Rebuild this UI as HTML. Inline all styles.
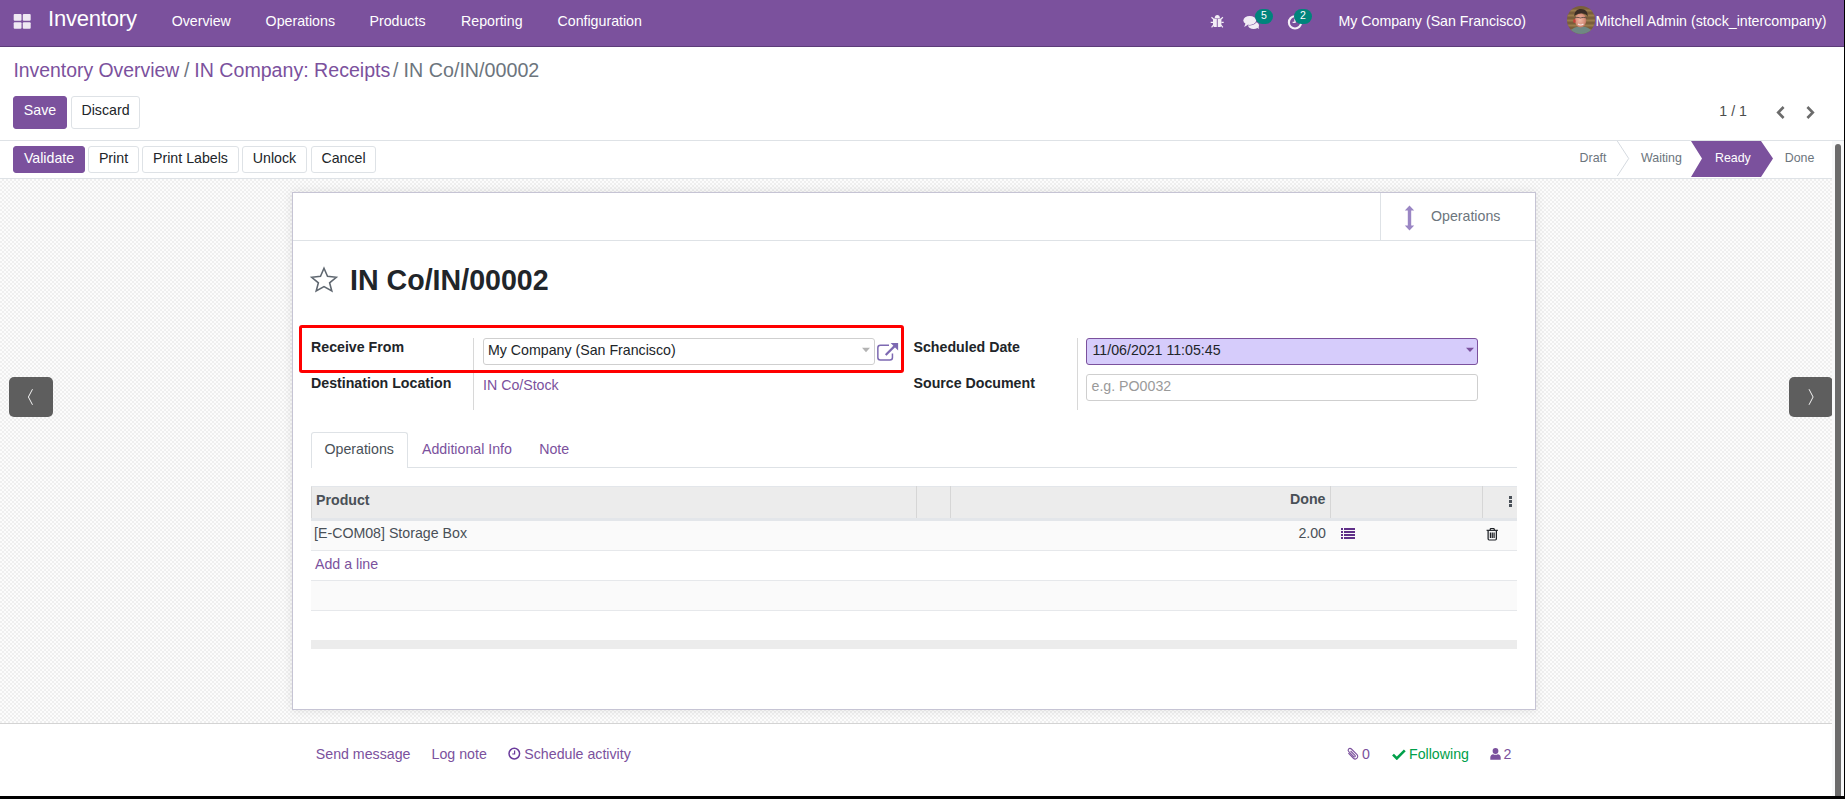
<!DOCTYPE html>
<html><head><meta charset="utf-8">
<style>
*{box-sizing:border-box;margin:0;padding:0}
html,body{width:1845px;height:799px;overflow:hidden;background:#000}
body{position:relative;font-family:"Liberation Sans",sans-serif;font-size:14.2px;color:#212529}
.a{position:absolute;white-space:nowrap;line-height:20px}
.b{position:absolute}
#page{position:absolute;left:0;top:0;width:1844px;height:796px;background:#fff;overflow:hidden}
#nav{position:absolute;left:0;top:0;width:1844px;height:47px;background:#7B519D;border-bottom:1px solid #5C3C79}
#nav .a{color:#fff}
.btn{position:absolute;border:1px solid #dee2e6;border-radius:3px;background:#fff}
.btnp{background:#7B519D;border-color:#7B519D}
.bt{position:absolute;left:0;right:0;text-align:center;white-space:nowrap;line-height:20px}
.lnk{color:#7B519D}
.hr{position:absolute;height:1px;background:#dee2e6}
.vr{position:absolute;width:1px;background:#dee2e6}
#formbg{position:absolute;left:0;top:179px;width:1832px;height:544px;background-color:#f6f6f6;
 background-image:repeating-conic-gradient(#efefef 0 25%, #fcfcfc 0 50%);background-size:4px 4px}
#sheet{position:absolute;left:292px;top:192px;width:1244px;height:518px;background:#fff;border:1px solid #c6c4d4;box-shadow:0 0 9px rgba(0,0,0,.10)}
.lbl{font-weight:bold;color:#212529}
.inp{position:absolute;border:1px solid #cfcfcf;border-radius:3px;background:#fff}
.g{color:#6c757d}
.bc{top:57px;font-size:19.4px;line-height:26px}
.st{font-size:12.4px}
.d{color:#495057}
</style></head>
<body>
<div id="page">
<!-- NAVBAR -->
<div id="nav">
  <svg class="b" style="left:13px;top:14px" width="19" height="16" viewBox="0 0 19 16"><g fill="#efe9f3"><rect x="0.7" y="0.1" width="7.8" height="6.7" rx="1"/><rect x="9.8" y="0.1" width="7.9" height="6.7" rx="1"/><rect x="0.7" y="8.2" width="7.8" height="6.6" rx="1"/><rect x="9.8" y="8.2" width="7.9" height="6.6" rx="1"/></g></svg>
  <div class="a" style="left:48px;top:6px;font-size:22px;line-height:26px;letter-spacing:-0.2px">Inventory</div>
  <div class="a" style="left:171.7px;top:11px">Overview</div>
  <div class="a" style="left:265.6px;top:11px">Operations</div>
  <div class="a" style="left:369.5px;top:11px">Products</div>
  <div class="a" style="left:461px;top:11px">Reporting</div>
  <div class="a" style="left:557.5px;top:11px">Configuration</div>
  <!-- bug -->
  <svg class="b" style="left:1210px;top:14px" width="15" height="15" viewBox="0 0 15 15"><g fill="#f3eef6"><path d="M4.7 3.9 C4.7 2.2 5.8 1 7.3 1 C8.8 1 9.9 2.2 9.9 3.9 Z"/><path d="M3 4.5 H11.4 V11.2 C11.4 12.2 10.6 13 9.6 13 H4.8 C3.8 13 3 12.2 3 11.2 Z"/></g><g stroke="#f3eef6" stroke-width="1.2" fill="none"><path d="M3 8.3 H0.7 M11.4 8.3 H13.7 M3.4 5 L1.5 3.3 M11 5 L12.9 3.3 M3.4 11 L1.6 13.4 M11 11 L12.8 13.4"/></g><rect x="6.8" y="4.8" width="0.9" height="8.2" fill="#7B519D"/></svg>
  <!-- chat -->
  <svg class="b" style="left:1238px;top:6px" width="28" height="28" viewBox="0 0 28 28"><g fill="#f1ecf5"><ellipse cx="15.6" cy="19.4" rx="5.4" ry="3.6"/><path d="M18.5 21.5 L21.2 23 L20.2 20.2 Z"/></g><ellipse cx="11.75" cy="14.4" rx="7" ry="5" fill="#7B519D"/><g fill="#f1ecf5"><ellipse cx="11.75" cy="14.4" rx="6.4" ry="4.5"/><path d="M7.5 17.6 L6.2 21 L10.4 18.6 Z"/></g></svg>
  <div class="b" style="left:1255px;top:9px;width:18px;height:15px;border-radius:7.5px;background:#00847C;color:#fff;font-size:10.5px;line-height:13px;text-align:center">5</div>
  <!-- activity clock -->
  <svg class="b" style="left:1287px;top:14px" width="16" height="16" viewBox="0 0 16 16"><circle cx="8" cy="8.4" r="6.1" fill="none" stroke="#f4f0f7" stroke-width="2.1"/><path d="M8 4.6 V8.4 H5.6" fill="none" stroke="#f1ecf5" stroke-width="1.4"/></svg>
  <div class="b" style="left:1294px;top:9px;width:18px;height:15px;border-radius:7.5px;background:#00847C;color:#fff;font-size:10.5px;line-height:13px;text-align:center">2</div>
  <div class="a" style="left:1338.4px;top:11px">My Company (San Francisco)</div>
  <!-- avatar -->
  <svg class="b" style="left:1567px;top:6px" width="28" height="28" viewBox="0 0 28 28">
    <defs><clipPath id="cav"><circle cx="14" cy="14" r="14"/></clipPath>
    <radialGradient id="fg" cx="0.45" cy="0.45" r="0.6"><stop offset="0" stop-color="#f0b9a6"/><stop offset="0.7" stop-color="#d68f7a"/><stop offset="1" stop-color="#b8705e"/></radialGradient></defs>
    <g clip-path="url(#cav)">
      <rect width="28" height="28" fill="#7a5f3a"/>
      <path d="M0 4.5 H28 M0 9.5 H28 M0 14.5 H28 M0 19.5 H28 M0 24.5 H28" stroke="#9a7c4c" stroke-width="2"/>
      <path d="M2 28 C3 23 8 20.5 14 20.5 C20 20.5 25 23 26 28 Z" fill="#6f8883"/>
      <ellipse cx="13.6" cy="14.4" rx="5.6" ry="7.2" fill="url(#fg)"/>
      <path d="M7.4 10.5 C7 5.5 10 3 14 3 C18.5 3 21.2 6 20.6 10.8 C19.4 8 16.5 7.2 13.5 7.4 C10.5 7.6 8.6 8.6 7.4 10.5 Z" fill="#3a2d26"/>
      <path d="M8 11.8 C10 11.2 12 11.4 13.4 12 C15 11.4 17.5 11.2 19.6 12" stroke="#5a4a44" stroke-width="0.9" fill="none"/>
      <path d="M11 18 C12.4 19.2 15 19.2 16.4 18" stroke="#f4e8e4" stroke-width="1.1" fill="none"/>
      <ellipse cx="7.4" cy="15" rx="1.3" ry="2" fill="#c8413a"/>
    </g>
  </svg>
  <div class="a" style="left:1595.5px;top:11px">Mitchell Admin (stock_intercompany)</div>
</div>

<!-- BREADCRUMB -->
<div class="a lnk bc" style="left:13.4px">Inventory Overview</div>
<div class="a g bc" style="left:184px">/</div>
<div class="a lnk bc" style="left:194.3px;font-size:19.6px">IN Company: Receipts</div>
<div class="a g bc" style="left:393px">/</div>
<div class="a g bc" style="left:403.6px;font-size:19.7px">IN Co/IN/00002</div>
<div class="btn btnp" style="left:13px;top:96px;width:54px;height:33px"><div class="bt" style="top:3px;color:#fff">Save</div></div>
<div class="btn" style="left:71px;top:96px;width:69px;height:33px"><div class="bt" style="top:3px">Discard</div></div>
<div class="a" style="left:1719.3px;top:101px;color:#4c4c4c">1 / 1</div>
<svg class="b" style="left:1775px;top:105px" width="11" height="15" viewBox="0 0 11 15"><path d="M8.6 2 L3.2 7.5 L8.6 13" fill="none" stroke="#6b6b6b" stroke-width="2.6"/></svg>
<svg class="b" style="left:1805px;top:105px" width="11" height="15" viewBox="0 0 11 15"><path d="M2.4 2 L7.8 7.5 L2.4 13" fill="none" stroke="#6b6b6b" stroke-width="2.6"/></svg>
<div class="hr" style="left:0;top:140px;width:1844px"></div>

<!-- STATUSBAR -->
<div class="btn btnp" style="left:13px;top:146px;width:72px;height:27px"><div class="bt" style="top:1px;color:#fff">Validate</div></div>
<div class="btn" style="left:88px;top:146px;width:51px;height:27px"><div class="bt" style="top:1px">Print</div></div>
<div class="btn" style="left:142px;top:146px;width:97px;height:27px"><div class="bt" style="top:1px">Print Labels</div></div>
<div class="btn" style="left:242px;top:146px;width:65px;height:27px"><div class="bt" style="top:1px">Unlock</div></div>
<div class="btn" style="left:311px;top:146px;width:65px;height:27px"><div class="bt" style="top:1px">Cancel</div></div>

<svg class="b" style="left:1600px;top:141px" width="240" height="37" viewBox="0 0 240 37">
  <path d="M17.3 0 L28.7 17.5 L17.3 35" fill="none" stroke="#d5dae0" stroke-width="1"/>
  <path d="M91 0 H161 L173 17.5 L161 36 H91 L102 17.5 Z" fill="#7B519D"/>
</svg>
<div class="a g st" style="left:1579.6px;top:148px">Draft</div>
<div class="a g st" style="left:1641px;top:148px">Waiting</div>
<div class="a st" style="left:1715px;top:148px;color:#fff">Ready</div>
<div class="a g st" style="left:1784.7px;top:148px">Done</div>
<div class="hr" style="left:0;top:178px;width:1832px"></div>

<!-- FORM BG -->
<div id="formbg"></div>
<div class="b" style="left:9px;top:377px;width:44px;height:40px;border-radius:5px;background:#5e5e5e"></div>
<svg class="b" style="left:26px;top:388px" width="9" height="18" viewBox="0 0 9 18"><path d="M6.5 1.2 L2.4 9 L6.5 16.8" fill="none" stroke="#f4f4f4" stroke-width="1"/></svg>
<div class="b" style="left:1789px;top:377px;width:44px;height:40px;border-radius:5px;background:#5e5e5e"></div>
<svg class="b" style="left:1807px;top:388px" width="9" height="18" viewBox="0 0 9 18"><path d="M2 1.2 L6.1 9 L2 16.8" fill="none" stroke="#f4f4f4" stroke-width="1"/></svg>

<div id="sheet"></div>
<!-- button box -->
<div class="hr" style="left:293px;top:240px;width:1242px"></div>
<div class="vr" style="left:1380px;top:193px;height:47px"></div>
<svg class="b" style="left:1404px;top:205px" width="11" height="26" viewBox="0 0 11 26"><path d="M5.5 0.6 L10.2 5.6 H7.2 V20.4 H10.2 L5.5 25.4 L0.8 20.4 H3.8 V5.6 H0.8 Z" fill="#9a86c4"/></svg>
<div class="a g" style="left:1431px;top:206px">Operations</div>

<!-- title -->
<svg class="b" style="left:305px;top:262px" width="38" height="36" viewBox="0 0 38 36"><path d="M19 6.2 L22.5 14.3 L31.3 15.3 L24.6 20.8 L26.8 29 L19 24.6 L11.2 29 L13.4 20.8 L6.7 15.3 L15.5 14.3 Z" fill="none" stroke="#5f6770" stroke-width="1.55" stroke-linejoin="miter" stroke-miterlimit="3"/></svg>
<div class="a" style="left:350px;top:262px;font-size:28.6px;line-height:36px;font-weight:bold;color:#212529">IN Co/IN/00002</div>

<!-- fields -->
<div class="a lbl" style="left:311px;top:337px">Receive From</div>
<div class="a lbl" style="left:311px;top:373px">Destination Location</div>
<div class="vr" style="left:473px;top:338px;height:72px;background:#d8d8d8"></div>
<div class="inp" style="left:483px;top:338px;width:392px;height:27px"></div>
<div class="a" style="left:488px;top:340px">My Company (San Francisco)</div>
<svg class="b" style="left:861px;top:347px" width="10" height="6" viewBox="0 0 10 6"><path d="M1 0.8 H9 L5 5.2 Z" fill="#b3b3b3"/></svg>
<svg class="b" style="left:876px;top:342px" width="24" height="20" viewBox="0 0 24 20"><path d="M13 3.15 H4.35 Q1.85 3.15 1.85 5.65 V15.45 Q1.85 17.95 4.35 17.95 H13.95 Q16.45 17.95 16.45 15.45 V11.4" fill="none" stroke="#7d69b2" stroke-width="1.5"/><path d="M9.7 13 L18.6 4.1" stroke="#7d69b2" stroke-width="2.2"/><path d="M14.6 1.1 H22.1 V8.6 Z" fill="#7d69b2"/></svg>
<div class="a lnk" style="left:483px;top:375px">IN Co/Stock</div>

<div class="a lbl" style="left:913.5px;top:337px">Scheduled Date</div>
<div class="a lbl" style="left:913.5px;top:373px">Source Document</div>
<div class="vr" style="left:1077px;top:338px;height:72px;background:#d8d8d8"></div>
<div class="b" style="left:1086px;top:338px;width:392px;height:27px;border:1px solid #7B519D;border-radius:3px;background:#d6ccfb"></div>
<div class="a" style="left:1092.5px;top:340px">11/06/2021 11:05:45</div>
<svg class="b" style="left:1465px;top:347px" width="10" height="6" viewBox="0 0 10 6"><path d="M1 0.8 H9 L5 5 Z" fill="#7B519D"/></svg>
<div class="inp" style="left:1086px;top:374px;width:392px;height:27px"></div>
<div class="a" style="left:1091.5px;top:376px;color:#9a9a9a">e.g. PO0032</div>

<div class="b" style="left:299px;top:325px;width:605px;height:48px;border:3px solid #ff0000;border-radius:3px"></div>
<!-- tabs -->
<div class="hr" style="left:311px;top:467px;width:1206px"></div>
<div class="b" style="left:311px;top:432px;width:97px;height:36px;border:1px solid #dee2e6;border-bottom:none;border-radius:3px 3px 0 0;background:#fff"></div>
<div class="a d" style="left:324.5px;top:439px">Operations</div>
<div class="a lnk" style="left:422px;top:439px">Additional Info</div>
<div class="a lnk" style="left:539.2px;top:439px">Note</div>

<!-- table -->
<div class="b" style="left:311px;top:486px;width:1206px;height:32px;background:#ececec;border-top:1px solid #e3e6ea;border-left:1px solid #d9d9d9"></div>
<div class="b" style="left:311px;top:518px;width:1206px;height:3px;background:#e3e6ea"></div>
<div class="vr" style="left:916px;top:486px;height:32px;background:#d6d6d6"></div>
<div class="vr" style="left:950px;top:486px;height:32px;background:#d6d6d6"></div>
<div class="vr" style="left:1330px;top:486px;height:32px;background:#d6d6d6"></div>
<div class="vr" style="left:1482px;top:486px;height:32px;background:#d6d6d6"></div>
<div class="a lbl d" style="left:316px;top:490px">Product</div>
<div class="a lbl d" style="left:1290px;top:489px">Done</div>
<svg class="b" style="left:1508px;top:495px" width="5" height="13" viewBox="0 0 5 13"><g fill="#4a5058"><rect x="1" y="1" width="3" height="3"/><rect x="1" y="5" width="3" height="3"/><rect x="1" y="9" width="3" height="3"/></g></svg>

<div class="b" style="left:311px;top:521px;width:1206px;height:29px;background:#fafafa"></div>
<div class="hr" style="left:311px;top:550px;width:1206px;background:#e6e8eb"></div>
<div class="a d" style="left:314px;top:523px">[E-COM08] Storage Box</div>
<div class="a d" style="left:1298.4px;top:523px">2.00</div>
<svg class="b" style="left:1341px;top:528px" width="15" height="11" viewBox="0 0 15 11"><g fill="#5f2f88"><rect x="0" y="0" width="2" height="2"/><rect x="3" y="0" width="11" height="2"/><rect x="0" y="3" width="2" height="2"/><rect x="3" y="3" width="11" height="2"/><rect x="0" y="6" width="2" height="2"/><rect x="3" y="6" width="11" height="2"/><rect x="0" y="9" width="2" height="2"/><rect x="3" y="9" width="11" height="2"/></g></svg>
<svg class="b" style="left:1486px;top:528px" width="12.5" height="12.6" viewBox="0 0 13 14" preserveAspectRatio="none"><g fill="none" stroke="#1e2126" stroke-width="1.3"><path d="M0.6 2.6 H12.4"/><path d="M4.4 2.4 V1.4 C4.4 0.9 4.8 0.6 5.3 0.6 H7.7 C8.2 0.6 8.6 0.9 8.6 1.4 V2.4"/><path d="M2.2 2.8 V12 C2.2 12.8 2.6 13.3 3.3 13.3 H9.7 C10.4 13.3 10.8 12.8 10.8 12 V2.8"/><path d="M4.6 5 V11 M6.5 5 V11 M8.4 5 V11"/></g></svg>

<div class="a lnk" style="left:315px;top:553.5px">Add a line</div>
<div class="hr" style="left:311px;top:580px;width:1206px;background:#e6e8eb"></div>
<div class="b" style="left:311px;top:581px;width:1206px;height:29px;background:#fafafa"></div>
<div class="hr" style="left:311px;top:610px;width:1206px;background:#e6e8eb"></div>
<div class="b" style="left:311px;top:640px;width:1206px;height:9px;background:#ececec"></div>

<!-- CHATTER -->
<div class="hr" style="left:0;top:723px;width:1832px;background:#d4d4d4"></div>
<div class="a lnk" style="left:315.8px;top:744px">Send message</div>
<div class="a lnk" style="left:431.6px;top:744px">Log note</div>
<svg class="b" style="left:508px;top:747px" width="14" height="14" viewBox="0 0 14 14"><circle cx="6.3" cy="6.6" r="5.3" fill="none" stroke="#6a3a9c" stroke-width="1.5"/><path d="M6.6 3.4 V7 H4.2" fill="none" stroke="#6a3a9c" stroke-width="1.2"/></svg>
<div class="a lnk" style="left:524.3px;top:744px">Schedule activity</div>

<svg class="b" style="left:1345px;top:747px;transform:scaleX(-1)" width="14" height="14" viewBox="0 0 14 14"><path d="M10.6 6.2 L5.8 11 C4.6 12.2 3 12.2 2 11.2 C1 10.2 1 8.6 2.2 7.4 L7.6 2 C8.4 1.2 9.6 1.2 10.3 1.9 C11 2.6 11 3.8 10.2 4.6 L5.2 9.6 C4.8 10 4.2 10 3.9 9.7 C3.6 9.4 3.6 8.8 4 8.4 L8.4 4" fill="none" stroke="#7B519D" stroke-width="1.1"/></svg>
<div class="a lnk" style="left:1362px;top:744px">0</div>
<svg class="b" style="left:1392px;top:749px" width="14" height="11" viewBox="0 0 14 11"><path d="M1 5.6 L4.8 9.4 L12.8 1.4" fill="none" stroke="#00a04a" stroke-width="2.6"/></svg>
<div class="a" style="left:1409px;top:744px;color:#00a04a">Following</div>
<svg class="b" style="left:1490px;top:748px" width="11" height="12" viewBox="0 0 11 12"><g fill="#7B519D"><circle cx="5.5" cy="3" r="2.9"/><path d="M0.3 11.8 V9.4 C0.3 7.4 1.6 6.4 3.2 6.2 C4.2 6.9 6.8 6.9 7.8 6.2 C9.4 6.4 10.7 7.4 10.7 9.4 V11.8 Z"/></g></svg>
<div class="a lnk" style="left:1503.6px;top:744px">2</div>

<!-- scrollbar -->
<div class="b" style="left:1832px;top:141px;width:12px;height:655px;background:#f8f9fa"></div>
<div class="b" style="left:1835px;top:144px;width:6px;height:655px;border-radius:3px;background:#6b6b6b"></div>
</div>
</body></html>
